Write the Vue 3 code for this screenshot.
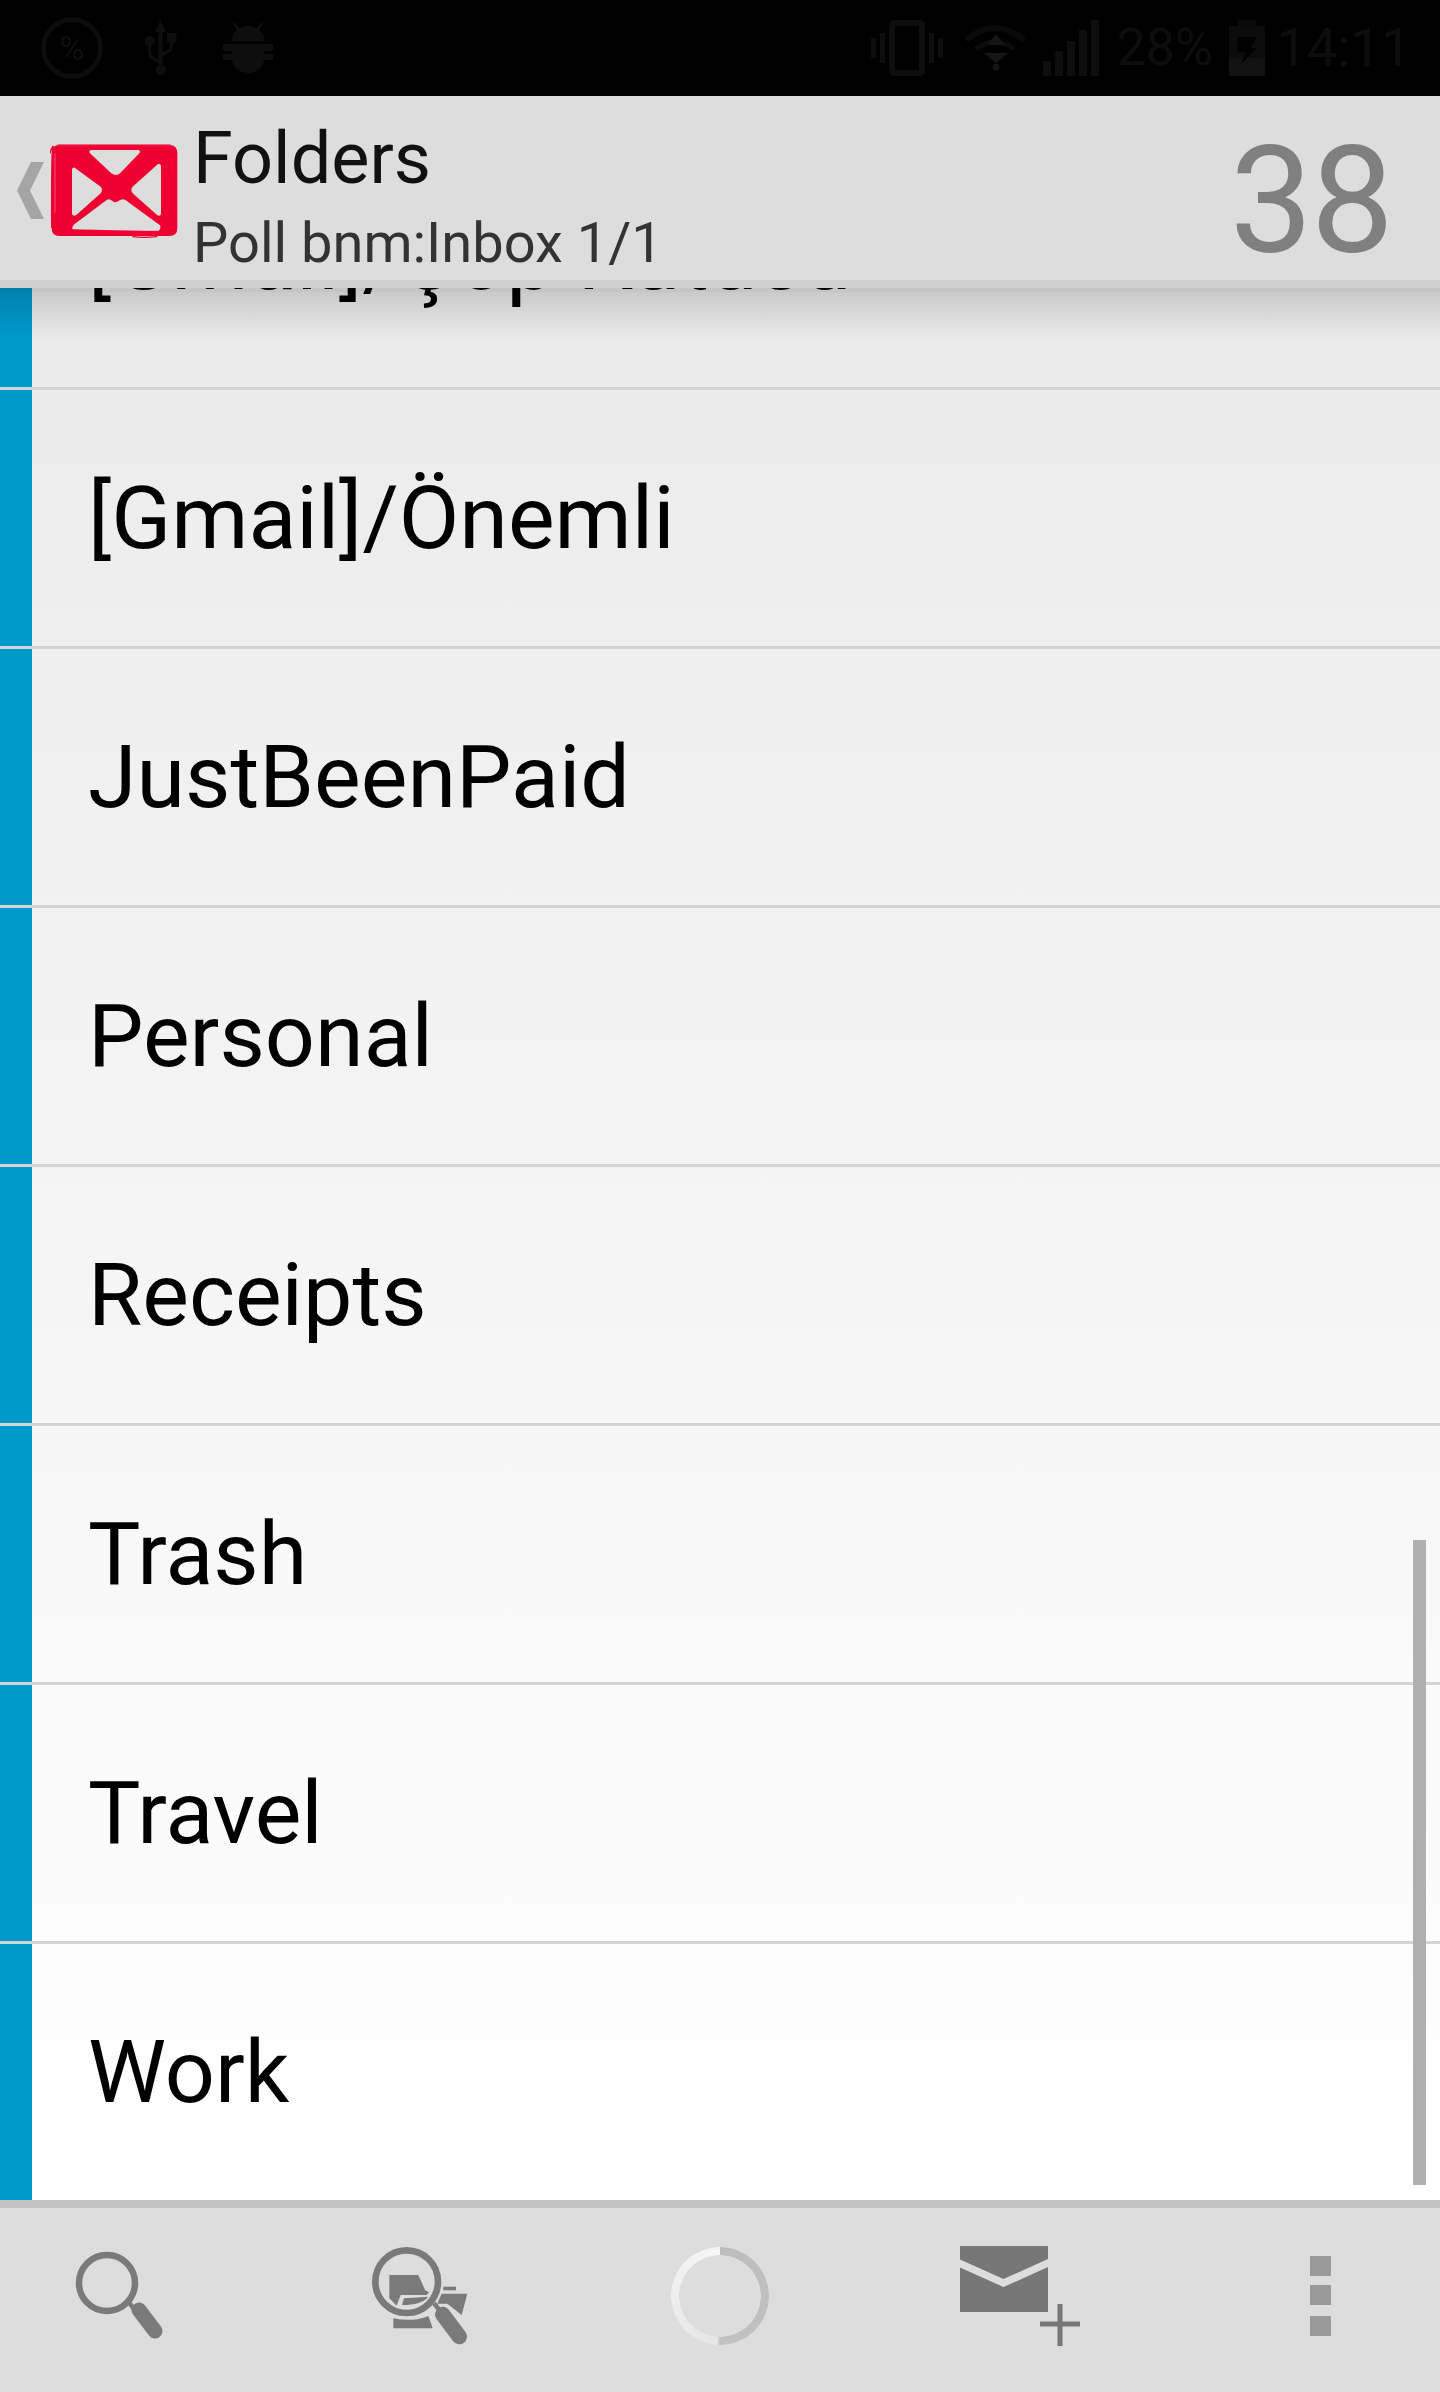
<script setup>
const folders = ['[Gmail]/Çöp Kutusu', '[Gmail]/Önemli', 'JustBeenPaid', 'Personal', 'Receipts', 'Trash', 'Travel', 'Work']
</script>

<template>
  <div class="page">
    <div class="status">
      <div class="group">
        <svg class="ic" width="62" height="62" viewBox="0 0 62 62">
          <circle cx="31" cy="31" r="28.5" fill="none" stroke="#0d0d0d" stroke-width="4.5" />
          <text x="31" y="43" text-anchor="middle" class="pct">%</text>
        </svg>
        <svg class="ic" width="36" height="56" viewBox="145 20 36 56">
          <path d="M160.5 20 L166 32 H162.5 V66 H158.500 V32 H155 Z M156 70 a5 5 0 1 0 10 0 a5 5 0 1 0 -10 0 Z" fill="#0e0e0e" />
          <circle cx="149.500" cy="41" r="5" fill="#0e0e0e" />
          <rect x="167" y="33" width="9.500" height="9.500" fill="#0e0e0e" />
          <path d="M149.500 44 V52 Q149.500 57 154 59 L160 62 M171.500 42 V46 Q171.500 50 167 52 L160 56" fill="none" stroke="#0e0e0e" stroke-width="3.200" />
        </svg>
        <svg class="ic" width="50" height="52" viewBox="223 23 50 52">
          <path d="M231 42 C232 32 240 27 248 27 C256 27 264 32 265 42 Z" fill="#0e0e0e" />
          <path d="M234 24 L239 31 M262 24 L257 31" stroke="#0e0e0e" stroke-width="2.500" />
          <path d="M223 45 H273 V52 H264 V55 H273 V61 H264 C263 69 256 74 248 74 C240 74 233 69 232 61 H223 V55 H232 V52 H223 Z" fill="#0e0e0e" />
        </svg>
      </div>
      <div class="group right">
        <svg class="ic" width="72" height="56" viewBox="0 0 72 56">
          <rect x="21" y="3" width="30" height="50" rx="2" fill="none" stroke="#0e0e0e" stroke-width="6" />
          <path d="M0 18 h5 v20 h-5 Z M9 13 h5 v30 h-5 Z M58 13 h5 v30 h-5 Z M67 18 h5 v20 h-5 Z" fill="#0e0e0e" />
        </svg>
        <svg class="ic wifi" width="64" height="50" viewBox="963 22 64 50">
          <path d="M966 39 Q995 15 1024 39" fill="none" stroke="#0a0a0a" stroke-width="6" />
          <path d="M976 48 Q995 34 1014 48" fill="none" stroke="#0b0b0b" stroke-width="5" />
          <path d="M996 33 L1005 44 H987 Z" fill="#161616" />
          <path d="M984 52 H1008 L996 62 Z" fill="#161616" />
          <circle cx="996" cy="66" r="3.500" fill="#161616" />
        </svg>
        <svg class="ic signal" width="56" height="56" viewBox="0 0 56 56">
          <path d="M0 41 h8 v15 h-8 Z M12 31 h8 v25 h-8 Z M24 21 h8 v35 h-8 Z M36 10 h8 v46 h-8 Z M48 0 h8 v56 h-8 Z" fill="#0e0e0e" />
        </svg>
        <span class="level">28%</span>
        <svg class="ic battery" width="36" height="56" viewBox="0 0 36 56">
          <rect x="9" y="0" width="18" height="6" fill="#0a0a0a" />
          <rect x="0" y="6" width="36" height="32" fill="#0c0c0c" />
          <rect x="0" y="38" width="36" height="18" fill="#121212" />
          <path d="M8.500 17 H28 L21.700 28 H28 L12 44 L16.800 32 H8.500 Z" fill="#000" />
        </svg>
        <span class="clock">14:11</span>
      </div>
    </div>

    <header class="bar">
      <svg class="back" width="27" height="58" viewBox="0 0 27 58">
        <path d="M14 0 H27 L13 28.500 L27 57 H14 L0 28.500 Z" fill="#a5a5a5" />
      </svg>
      <svg class="logo" width="128" height="94" viewBox="148 44 384 282">
        <path fill-rule="evenodd" fill="#ee0033" d="M176 47 H506 Q530 47 530 72 V296 Q530 320 506 320 H176 Q153 320 153 296 V72 Q153 47 176 47 Z
          M272 62 Q262 64 268 72 L332 132 Q345 142 358 132 L416 72 Q422 64 412 62 Z
          M222 115 Q214 112 214 122 V250 Q214 262 226 258 L300 192 Q308 180 300 172 Z
          M472 104 L396 172 Q388 180 396 192 L470 258 Q481 262 481 250 V112 Q481 102 472 104 Z
          M318 212 L222 284 Q212 294 216 300 L468 306 Q484 302 478 288 L374 212 Q366 206 352 216 Q344 222 336 216 Q326 206 318 212 Z" />
        <path d="M148 72 Q150 60 158 50 Q152 70 153 296" fill="none" stroke="#ee0033" stroke-width="4" />
        <path d="M163 72 V250" fill="none" stroke="#f4a0b0" stroke-width="1.500" />
        <path d="M170 46 H510" fill="none" stroke="#f25070" stroke-width="3" />
        <path d="M395 322 Q430 326 470 322" fill="none" stroke="#ee0033" stroke-width="4" />
        <path d="M360 306 H470" fill="none" stroke="#ee0033" stroke-width="3" />
      </svg>
      <div class="titles">
        <div class="title">Folders</div>
        <div class="sub">Poll bnm:Inbox 1/1</div>
      </div>
      <div class="count">38</div>
    </header>
    <div class="strip"></div>

    <main class="list">
      <div v-for="name in folders" :key="name" class="row">{{ name }}</div>
      <div class="shade"></div>
      <div class="thumb"></div>
    </main>

    <footer class="tools">
      <div class="cell">
        <svg width="120" height="176" viewBox="60 2208 120 176">
          <circle cx="107" cy="2283" r="28" fill="none" stroke="#7a7a7a" stroke-width="6.500" />
          <path d="M129 2302 L135 2311" stroke="#7a7a7a" stroke-width="4.500" />
          <path d="M139 2310 L155 2331" stroke="#7a7a7a" stroke-width="15" stroke-linecap="round" />
        </svg>
      </div>
      <div class="cell">
        <svg width="120" height="176" viewBox="360 2208 120 176">
          <g transform="translate(360 2235) scale(0.3333)" fill="#7a7a7a">
            <circle cx="140" cy="140" r="94" fill="none" stroke="#7a7a7a" stroke-width="20" />
            <path d="M88 120 H175 L195 165 L207 172 L200 180 H122 L110 212 L88 190 Z" />
            <path d="M132 190 L205 185 Q185 210 126 210 Z" />
            <path d="M250 155 H288 V166 H250 Z" />
            <path d="M245 176 H322 L305 240 L262 206 L232 206 Z" />
            <path d="M100 250 Q160 262 205 243 L212 262 L218 280 H100 Z" />
            <path d="M222 205 L242 230" stroke="#7a7a7a" stroke-width="14" fill="none" />
            <path d="M248 238 L298 305" stroke="#7a7a7a" stroke-width="46" stroke-linecap="round" fill="none" />
          </g>
        </svg>
      </div>
      <div class="cell">
        <div class="spinner"></div>
      </div>
      <div class="cell">
        <svg width="120" height="176" viewBox="960 2208 120 176">
          <path d="M959 2246 H1048 V2259 L1003.500 2279 L959 2259 Z" fill="#777" />
          <path d="M959 2267 L1003.500 2287 L1048 2267 V2312 H959 Z" fill="#777" />
          <path d="M1040 2324 H1081 M1060 2304 V2346" stroke="#777" stroke-width="5" />
        </svg>
      </div>
      <div class="cell">
        <svg width="120" height="176" viewBox="1260 2208 120 176">
          <path d="M1310 2256 h21 v20 h-21 Z M1310 2285 h21 v20 h-21 Z M1310 2316 h21 v20 h-21 Z" fill="#999" />
        </svg>
      </div>
    </footer>
  </div>
</template>

<style>
html, body { margin: 0; background: #000; }
</style>

<style scoped>
.page {
  width: 1440px;
  height: 2392px;
  display: flex;
  flex-direction: column;
  overflow: hidden;
  font-family: Roboto, "Liberation Sans", sans-serif;
}
.status {
  flex: none;
  height: 96px;
  background: #000;
  display: flex;
  justify-content: space-between;
  align-items: center;
  padding: 0 29px 0 41px;
  box-sizing: border-box;
  color: #0d0d0d;
}
.group { display: flex; align-items: center; gap: 42px; }
.group.right { gap: 0; }
.ic { display: block; flex: none; }
.pct { font-family: Roboto, sans-serif; font-size: 34px; fill: #0e0e0e; }
.wifi { margin-left: 20px; }
.signal { margin-left: 16px; }
.level { margin-left: 18px; font-size: 52px; line-height: 56px; width: 92px; white-space: nowrap; }
.battery { margin-left: 20px; }
.clock { margin-left: 12px; font-size: 54px; line-height: 56px; white-space: nowrap; }

.bar {
  flex: none;
  height: 184px;
  background: #dddddd;
  display: flex;
  align-items: center;
  padding: 0 48px 0 17px;
  box-sizing: border-box;
  position: relative;
}
.back { flex: none; margin-top: 6px; }
.logo { flex: none; margin: 6px 0 0 6px; }
.titles { margin: 26px 0 0 15px; flex: 1; min-width: 0; }
.title { font-size: 72px; line-height: 80px; color: #111; }
.sub { font-size: 56px; line-height: 80px; margin-top: 4px; color: #333; }
.count { font-size: 148px; line-height: 184px; letter-spacing: -2px; color: #808080; margin-top: 28px; }
.strip { flex: none; height: 8px; background: #cfcfcf; }

.list {
  flex: none;
  height: 1912px;
  position: relative;
  overflow: hidden;
  display: flex;
  flex-direction: column;
  justify-content: flex-end;
  background: linear-gradient(#ebebeb, #ffffff);
}
.row {
  flex: none;
  height: 259px;
  box-sizing: border-box;
  border-bottom: 3px solid #d4d4d4;
  background: linear-gradient(#0099cc, #0099cc) left top / 32px 100% no-repeat;
  padding: 0 0 2px 88px;
  display: flex;
  align-items: center;
  font-size: 88px;
  color: #000;
  white-space: nowrap;
}
.row:nth-child(8) { height: 256px; border-bottom: 0; }
.shade {
  position: absolute;
  left: 0;
  right: 0;
  top: 0;
  height: 52px;
  background: linear-gradient(rgba(0, 0, 0, 0.16) 0, rgba(0, 0, 0, 0.16) 4px, rgba(0, 0, 0, 0.14) 4px, rgba(0, 0, 0, 0) 52px);
}
.thumb {
  position: absolute;
  left: 1413px;
  top: 1252px;
  width: 13px;
  height: 645px;
  background: #b0b0b0;
}

.tools {
  flex: none;
  height: 192px;
  box-sizing: border-box;
  border-top: 8px solid #c4c4c4;
  background: #dddddd;
  padding: 0 60px;
  display: flex;
  justify-content: space-between;
}
.cell {
  width: 120px;
  height: 176px;
  display: flex;
  align-items: center;
  justify-content: center;
}
.cell svg { display: block; }
.spinner {
  width: 98px;
  height: 98px;
  border-radius: 50%;
  background: conic-gradient(#bdbdbd 0%, #c2c2c2 50%, #e6e6e6 51%, #f6f6f6 100%);
  -webkit-mask: radial-gradient(circle, transparent 40.5px, #000 41px);
  mask: radial-gradient(circle, transparent 40.5px, #000 41px);
}
</style>
